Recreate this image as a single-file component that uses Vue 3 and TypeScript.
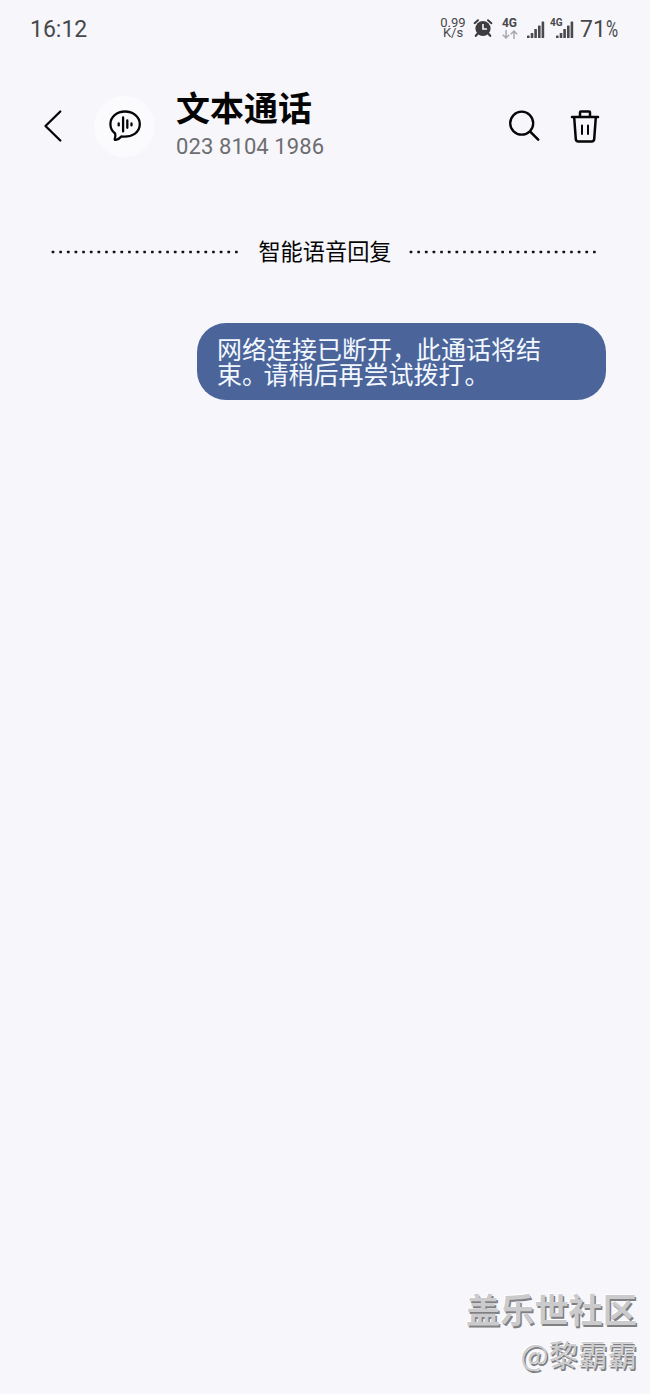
<script setup lang="ts">
interface Bar {
  x: number
  h: number
}

const signalBars: Bar[] = [
  { x: 0, h: 2.5 },
  { x: 3.7, h: 5 },
  { x: 7.3, h: 9 },
  { x: 11, h: 12.5 },
  { x: 14.6, h: 16.5 },
]
const dots: number[] = Array.from({ length: 25 }, (_, i) => 2 + i * 7.64)
</script>

<template>
  <main class="screen">
    <header class="status">
      <span class="clock">16:12</span>
      <div class="indicators">
        <div class="speed"><span>0.99</span><span>K/s</span></div>
        <svg class="alarm" width="20" height="20" viewBox="0 0 20 20">
          <circle cx="10" cy="10.5" r="7.6" fill="#3d3d3f" />
          <path d="M1.6 5.2 5 2.2M18.4 5.2 15 2.2" stroke="#3d3d3f" stroke-width="2" stroke-linecap="round" />
          <path d="m4.8 15.5-2 2.3M15.2 15.5l2 2.3" stroke="#3d3d3f" stroke-width="2.2" stroke-linecap="round" />
          <path d="M10 6v5h4" fill="none" stroke="#f6f6fb" stroke-width="1.6" />
        </svg>
        <div class="network">
          <span>4G</span>
          <svg width="16" height="9" viewBox="0 0 16 9" fill="none" stroke="#a9a9ad" stroke-width="1.5">
            <path d="M4 0v8M.8 4.8 4 8l3.200-3.200M12 9V1M8.800 4.200 12 1l3.200 3.200" />
          </svg>
        </div>
        <svg class="signal" width="18" height="17" viewBox="0 0 18 17">
          <rect v-for="b in signalBars" :key="b.x" :x="b.x" :y="17 - b.h" width="2.6" :height="b.h" rx=".6" fill="#4a4a4c" />
        </svg>
        <div class="second-sim">
          <svg width="18" height="17" viewBox="0 0 18 17">
            <rect v-for="b in signalBars" :key="b.x" :x="b.x" :y="17 - b.h" width="2.6" :height="b.h" rx=".6" fill="#4a4a4c" />
          </svg>
          <span class="sim-label">4G</span>
        </div>
        <span class="battery">71<span class="percent">%</span></span>
      </div>
    </header>

    <section class="toolbar">
      <svg class="back" width="20" height="34" viewBox="0 0 20 34">
        <path d="M17.300 2.500 2.500 17l14.800 14.500" fill="none" stroke="#050505" stroke-width="2.300" stroke-linecap="round" stroke-linejoin="round" />
      </svg>
      <div class="avatar">
        <svg width="34" height="34" viewBox="0 0 34 34" fill="none" stroke="#050505" stroke-linecap="round" stroke-linejoin="round">
          <path d="M17 2.500C8.800 2.500 2.400 7.900 2.400 15.100c0 4.100 1.800 7.300 4.700 9.400.5 1.800.5 3.500-.3 5.100-.4.900.1 1.500 1 1.200 2.400-.5 4.200-1.500 5.500-3.300 11 1.200 18.500-4.200 18.500-12.400C31.800 7.900 25.200 2.500 17 2.500Z" stroke-width="2.300" />
          <path d="M10.700 14.400v2M15.100 8.500v13.900M19.300 11.400v7.400M23.500 14.400v2" stroke-width="2.300" />
        </svg>
      </div>
      <div class="contact">
        <h1>文本通话</h1>
        <p>023 8104 1986</p>
      </div>
      <div class="actions">
        <svg width="34" height="34" viewBox="0 0 34 34" fill="none" stroke="#050505" stroke-width="2.300" stroke-linecap="round">
          <circle cx="13.700" cy="14.200" r="11.500" />
          <path d="m22.200 22.700 8 8" stroke-width="2.600" />
        </svg>
        <svg width="32" height="36" viewBox="0 0 32 36" fill="none" stroke="#050505" stroke-width="2.500" stroke-linecap="round" stroke-linejoin="round">
          <path d="M3 9h26M11 8.500V4.500q0-1 1-1h8q1 0 1 1v4M5.200 9.500l1.600 21.700Q7 33.500 9.300 33.500h13.400q2.300 0 2.500-2.300L26.800 9.500" />
          <path d="M13 17.500V26M19 17.500V26" stroke-width="2" />
        </svg>
      </div>
    </section>

    <div class="divider">
      <svg width="188" height="4" viewBox="0 0 188 4"><rect v-for="d in dots" :key="d" :x="d - 1.3" y=".7" width="2.600" height="2.600" rx=".6" fill="#111" /></svg>
      <span>智能语音回复</span>
      <svg width="188" height="4" viewBox="0 0 188 4"><rect v-for="d in dots" :key="d" :x="d - 1.3" y=".7" width="2.600" height="2.600" rx=".6" fill="#111" /></svg>
    </div>

    <article class="bubble">
      <div>网络连接已断开<span class="mark">，</span>此通话将结</div>
      <div>束<span class="stop">。</span>请稍后再尝试拨打<span class="stop last">。</span></div>
    </article>

    <footer class="watermark">
      <strong>盖乐世社区</strong>
      <span>@黎霸霸</span>
    </footer>
  </main>
</template>

<style>
body {
  margin: 0;
  background: #f6f6fb;
}
</style>

<style scoped>
.screen {
  width: 650px;
  height: 1394px;
  box-sizing: border-box;
  display: flex;
  flex-direction: column;
  overflow: hidden;
  background: #f6f6fb;
  font-family: Roboto, "Noto Sans CJK SC", sans-serif;
  color: #050505;
}
svg {
  display: block;
  flex: none;
}
.status {
  height: 56px;
  padding: 0 31px 0 30px;
  display: flex;
  align-items: center;
  justify-content: space-between;
  color: #48484a;
}
.clock {
  padding-top: 3px;
  font-size: 23px;
  line-height: 28px;
}
.indicators {
  display: flex;
  align-items: center;
}
.speed {
  width: 26px;
  display: flex;
  flex-direction: column;
  align-items: center;
  font-size: 13px;
  line-height: 10px;
}
.alarm {
  margin-left: 7px;
}
.network {
  width: 17px;
  margin-left: 8px;
  display: flex;
  flex-direction: column;
  align-items: center;
  gap: 2px;
  font: bold 12px/10px Roboto, sans-serif;
}
.signal {
  margin: 2px 0 0 9px;
}
.second-sim {
  position: relative;
  margin: 2px 0 0 11px;
}
.sim-label {
  position: absolute;
  left: -6px;
  top: -3px;
  font: bold 10px/10px Roboto, sans-serif;
}
.battery {
  width: 39px;
  margin-left: 6px;
  padding-top: 3px;
  display: flex;
  font-size: 23px;
  line-height: 28px;
}
.percent {
  transform: scaleX(0.72);
  transform-origin: left;
  width: 13px;
}
.toolbar {
  height: 72px;
  margin-top: 34px;
  padding: 0 49px 0 43px;
  display: flex;
  align-items: center;
}
.avatar {
  width: 61px;
  height: 61px;
  margin-left: 31px;
  border-radius: 50%;
  background: #fbfbfe;
  display: grid;
  place-items: center;
}
.contact {
  margin-left: 21px;
}
h1 {
  margin: -4px 0 0;
  font: bold 34px/36px "Noto Sans CJK SC", sans-serif;
}
p {
  margin: 10px 0 0;
  font-size: 22px;
  line-height: 24px;
  letter-spacing: 0.1px;
  color: #6d6d70;
}
.actions {
  margin-left: auto;
  display: flex;
  align-items: center;
  gap: 27px;
}
.divider {
  height: 30px;
  margin: 75px 53px 0 51px;
  display: flex;
  align-items: center;
  justify-content: space-between;
  font-size: 22.2px;
  line-height: 30px;
  white-space: nowrap;
}
.divider span {
  margin-left: 2px;
}
.bubble {
  width: 409px;
  height: 77px;
  box-sizing: border-box;
  margin: 56px 44px 0 auto;
  padding: 13px 20px 0;
  border-radius: 29px;
  background: #4b659b;
  color: #f3f8ff;
  font: 25px/25px "Noto Sans CJK SC", sans-serif;
  white-space: nowrap;
}
.mark {
  letter-spacing: -1px;
}
.stop {
  letter-spacing: -3.5px;
}
.last {
  margin-left: 1px;
}
.watermark {
  margin: auto 13px 23px auto;
  display: flex;
  flex-direction: column;
  align-items: flex-end;
  color: #cbcbcd;
  font-family: "Noto Sans CJK SC", sans-serif;
  text-shadow: 1.5px 1.5px 0 #808083, -1px -1px 0 #fff;
}
.watermark strong {
  font-size: 34.2px;
  line-height: 40px;
}
.watermark span {
  margin-top: 7px;
  font-size: 29.5px;
  line-height: 36px;
}
</style>
